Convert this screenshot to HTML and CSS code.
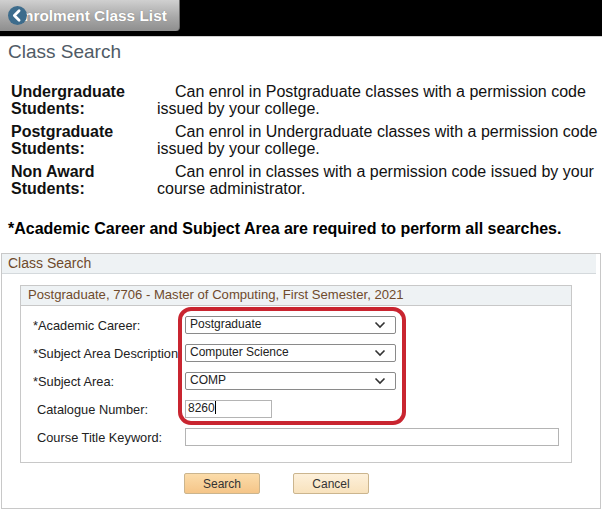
FILE: index.html
```html
<!DOCTYPE html>
<html lang="en">
<head>
    <meta charset="UTF-8">
    <link rel="stylesheet" href="styles.css">
</head>
<body>
    <div class="topbar">
        <div class="back-btn">
            <span class="back-icon">
                <svg width="19" height="19" viewBox="0 0 18 18"><polyline points="10.5,4.5 6,9 10.5,13.5" fill="none" stroke="#fff" stroke-width="2.6" stroke-linecap="round" stroke-linejoin="round"/></svg>
            </span>
            <span class="back-text">nrolment Class List</span>
        </div>
    </div>

    <div class="page-title">Class Search</div>

    <div class="info">
        <div class="info-label">Undergraduate Students:</div>
        <div class="info-text">Can enrol in Postgraduate classes with a permission code issued by your college.</div>
        <div class="info-label">Postgraduate Students:</div>
        <div class="info-text">Can enrol in Undergraduate classes with a permission code issued by your college.</div>
        <div class="info-label">Non Award Students:</div>
        <div class="info-text">Can enrol in classes with a permission code issued by your course administrator.</div>
    </div>

    <div class="req-note">*Academic Career and Subject Area are required to perform all searches.</div>

    <div class="search-box">
        <div class="box-header">Class Search</div>
        <div class="group">
            <div class="group-header">Postgraduate, 7706 - Master of Computing, First Semester, 2021</div>
            <div class="form">
                <div class="form-label">*Academic Career:</div>
                <div class="select"><span>Postgraduate</span><svg width="12" height="8" viewBox="0 0 12 8"><polyline points="1.5,1.5 6,6 10.5,1.5" fill="none" stroke="#333" stroke-width="1.6"/></svg></div>

                <div class="form-label">*Subject Area Description</div>
                <div class="select"><span>Computer Science</span><svg width="12" height="8" viewBox="0 0 12 8"><polyline points="1.5,1.5 6,6 10.5,1.5" fill="none" stroke="#333" stroke-width="1.6"/></svg></div>

                <div class="form-label">*Subject Area:</div>
                <div class="select"><span>COMP</span><svg width="12" height="8" viewBox="0 0 12 8"><polyline points="1.5,1.5 6,6 10.5,1.5" fill="none" stroke="#333" stroke-width="1.6"/></svg></div>

                <div class="form-label plain">Catalogue Number:</div>
                <div><div class="input short">8260<span class="caret"></span></div></div>

                <div class="form-label plain">Course Title Keyword:</div>
                <div class="input long"></div>
            </div>
            <div class="highlight"></div>
        </div>
        <div class="buttons">
            <button class="btn btn-search">Search</button>
            <button class="btn btn-cancel">Cancel</button>
        </div>
    </div>
</body>
</html>
```

FILE: styles.css
```css
html, body {
    margin: 0;
    padding: 0;
    background: #fff;
    font-family: "Liberation Sans", Arial, sans-serif;
    color: #000;
}

.topbar {
    height: 36px;
    background: #000;
    border-bottom: 1px solid #cfcfcf;
}

.back-btn {
    width: 180px;
    height: 31px;
    display: flex;
    align-items: center;
    background: linear-gradient(#d0d0d0, #a8a8a8 55%, #8e8e8e);
    border-right: 1px solid #6a6a6a;
    border-radius: 0 0 4px 0;
    box-sizing: border-box;
}

.back-icon {
    width: 19px;
    height: 19px;
    border-radius: 50%;
    background: #3d6c8c;
    display: flex;
    margin-left: 8px;
    flex-shrink: 0;
    position: relative;
    z-index: 1;
}

.back-text {
    color: #fff;
    font-weight: bold;
    font-size: 15.4px;
    margin-left: -3px;
    text-shadow: 0 0 1px #777;
}

.page-title {
    font-size: 19px;
    color: #505b66;
    padding: 3px 0 0 8px;
    height: 24px;
    line-height: 24px;
}

.info {
    display: grid;
    grid-template-columns: 146px 1fr;
    row-gap: 6px;
    margin: 19px 0 0 11px;
    font-size: 16px;
    line-height: 17px;
    color: #111;
}

.info-label {
    font-weight: bold;
    width: 125px;
}

.info-text {
    text-indent: 18px;
}

.req-note {
    font-weight: bold;
    font-size: 16px;
    margin: 23px 0 0 8px;
    line-height: 18px;
}

.search-box {
    margin: 15px 1px 0 1px;
    border: 1px solid #c8c8c8;
    height: 256px;
    box-sizing: border-box;
}

.box-header {
    background: #eef2f4;
    color: #6f4a2c;
    font-size: 14px;
    height: 19px;
    line-height: 18px;
    padding-left: 6px;
    margin: 0 4px 0 0;
    border-bottom: 1px solid #d4d9dc;
}

.group {
    position: relative;
    margin: 11px 0 0 18px;
    width: 552px;
    border: 1px solid #c8c8c8;
    box-sizing: border-box;
}

.group-header {
    background: #eef2f4;
    color: #6f4a2c;
    font-size: 13.1px;
    height: 19px;
    line-height: 18px;
    padding-left: 7px;
    border-bottom: 1px solid #c8c8c8;
}

.form {
    display: grid;
    grid-template-columns: 152px 374px;
    row-gap: 10px;
    padding: 10px 0 16px 12px;
    align-items: center;
}

.form-label {
    font-size: 12.8px;
    color: #222;
    white-space: nowrap;
    overflow: hidden;
    height: 18px;
    line-height: 20px;
}

.form-label.plain {
    padding-left: 4px;
}

.select {
    width: 211px;
    height: 18px;
    box-sizing: border-box;
    border: 1px solid #8a8a8a;
    border-radius: 2px;
    display: flex;
    align-items: center;
    justify-content: space-between;
    padding: 0 9px 0 4px;
    font-size: 12px;
    color: #222;
}

.select span {
    margin-top: -2px;
}

.input {
    height: 18px;
    box-sizing: border-box;
    border: 1px solid #b4b4b4;
    font-size: 12px;
    color: #222;
    padding-left: 2px;
    line-height: 15px;
}

.input.short {
    width: 87px;
}

.input.long {
    width: 374px;
}

.caret {
    display: inline-block;
    width: 1px;
    height: 13px;
    background: #000;
    vertical-align: -2px;
}

.highlight {
    position: absolute;
    left: 157px;
    top: 21px;
    width: 228px;
    height: 118px;
    border: 4px solid #c92530;
    border-radius: 13px;
    box-sizing: border-box;
}

.buttons {
    display: flex;
    gap: 33px;
    margin: 10px 0 0 182px;
}

.btn {
    width: 76px;
    height: 21px;
    font-family: "Liberation Sans", Arial, sans-serif;
    font-size: 12px;
    color: #333;
    border: 1px solid #cbb58e;
    border-radius: 2px;
    padding: 0;
}

.btn-search {
    background: linear-gradient(#fbdcaa, #f5c588);
}

.btn-cancel {
    background: linear-gradient(#fdf0da, #f8e2bd);
}
```
